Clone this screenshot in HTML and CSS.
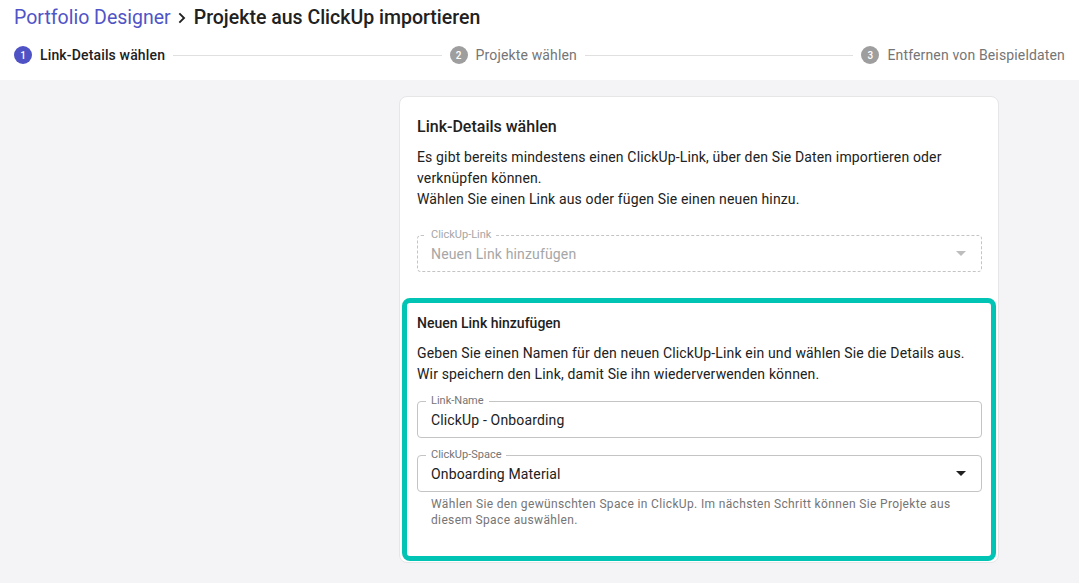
FILE: index.html
```html
<!DOCTYPE html>
<html lang="de">
<head>
    <meta charset="UTF-8">
    <title>Projekte aus ClickUp importieren</title>
    <link rel="stylesheet" href="styles.css">
</head>
<body>
    <header class="header">
        <h1 class="title">
            <span class="title-link">Portfolio Designer</span>
            <svg class="chevron" viewBox="0 0 24 24" width="20" height="20"><path d="M9.6 5.6 8 7.2 12.8 12 8 16.8l1.6 1.6L16 12z" fill="#212121"/></svg>
            <span class="title-current">Projekte aus ClickUp importieren</span>
        </h1>
        <div class="stepper">
            <div class="step active"><span class="step-num">1</span>Link-Details wählen</div>
            <div class="step-line"></div>
            <div class="step"><span class="step-num">2</span>Projekte wählen</div>
            <div class="step-line"></div>
            <div class="step"><span class="step-num">3</span>Entfernen von Beispieldaten</div>
        </div>
    </header>

    <main class="main">
        <div class="card">
            <div class="card-section">
                <h2 class="card-title">Link-Details wählen</h2>
                <p class="text">Es gibt bereits mindestens einen ClickUp-Link, über den Sie Daten importieren oder verknüpfen können.<br>Wählen Sie einen Link aus oder fügen Sie einen neuen hinzu.</p>
                <div class="field disabled">
                    <span class="field-label">ClickUp-Link</span>
                    <span class="field-value">Neuen Link hinzufügen</span>
                    <span class="caret"></span>
                </div>
            </div>

            <div class="new-link">
                <h3 class="new-link-title">Neuen Link hinzufügen</h3>
                <p class="text">Geben Sie einen Namen für den neuen ClickUp-Link ein und wählen Sie die Details aus.<br>Wir speichern den Link, damit Sie ihn wiederverwenden können.</p>
                <div class="field">
                    <span class="field-label">Link-Name</span>
                    <span class="field-value">ClickUp - Onboarding</span>
                </div>
                <div class="field select">
                    <span class="field-label">ClickUp-Space</span>
                    <span class="field-value">Onboarding Material</span>
                    <span class="caret"></span>
                </div>
                <p class="helper">Wählen Sie den gewünschten Space in ClickUp. Im nächsten Schritt können Sie Projekte aus diesem Space auswählen.</p>
            </div>
        </div>
    </main>
</body>
</html>
```

FILE: styles.css
```css
body {
    margin: 0;
    font-family: Roboto, "Liberation Sans", Arial, sans-serif;
    color: #212121;
    background-color: #fff;
}

.header {
    padding: 6px 14px 13px 14px;
}

.title {
    margin: 0;
    font-size: 19.5px;
    font-weight: 400;
    line-height: 24px;
    display: flex;
    align-items: center;
}

.title-link {
    color: #5054c6;
}

.title-current {
    font-weight: 500;
}

.chevron {
    margin: 0 2px 0 1px;
}

.stepper {
    margin-top: 13px;
    display: flex;
    align-items: center;
    height: 24px;
}

.step {
    display: flex;
    align-items: center;
    gap: 8px;
    font-size: 14px;
    letter-spacing: 0.15px;
    color: #757575;
    white-space: nowrap;
}

.step.active {
    color: #212121;
    font-weight: 500;
}

.step-num {
    width: 18px;
    height: 18px;
    border-radius: 50%;
    background-color: #9e9e9e;
    color: #fff;
    font-size: 10px;
    font-weight: 500;
    letter-spacing: 0;
    display: flex;
    align-items: center;
    justify-content: center;
}

.step.active .step-num {
    background-color: #4e52c4;
}

.step-line {
    flex: 1;
    height: 1px;
    background-color: #e0e0e0;
    margin: 0 8px;
}

.main {
    background-color: #f4f4f6;
    min-height: 503px;
    padding: 16px 0 0 399px;
    box-sizing: border-box;
}

.card {
    width: 600px;
    box-sizing: border-box;
    background-color: #fff;
    border: 1px solid #e6e6e8;
    border-radius: 8px;
}

.card-section {
    padding: 18px 16px 26px 17px;
}

.card-title {
    margin: 0 0 8px 0;
    font-size: 16px;
    font-weight: 500;
    line-height: 24px;
}

.text {
    margin: 0;
    font-size: 14px;
    line-height: 21px;
    letter-spacing: 0.15px;
    color: #212121;
}

.field {
    position: relative;
    margin-top: 25px;
    height: 37px;
    box-sizing: border-box;
    border: 1px solid #c4c4c4;
    border-radius: 4px;
    padding: 0 13px;
    display: flex;
    align-items: center;
    justify-content: space-between;
}

.field.disabled {
    border-style: dashed;
}

.field-label {
    position: absolute;
    top: -8px;
    left: 8px;
    padding: 0 5px;
    background-color: #fff;
    font-size: 11px;
    line-height: 14px;
    color: #757575;
}

.field.disabled .field-label,
.field.disabled .field-value {
    color: #a6a6a6;
}

.field-value {
    font-size: 14px;
    letter-spacing: 0.15px;
}

.caret {
    width: 0;
    height: 0;
    border-left: 5px solid transparent;
    border-right: 5px solid transparent;
    border-top: 5px solid #212121;
    margin-right: 2px;
}

.field.disabled .caret {
    border-top-color: #bdbdbd;
}

.new-link {
    margin: 0 2px 1px 2px;
    border: 5px solid #02c4b4;
    border-radius: 8px;
    padding: 10px 9px 28px 10px;
}

.new-link-title {
    margin: 0 0 10px 0;
    font-size: 14px;
    font-weight: 500;
    line-height: 20px;
}

.new-link .field {
    margin-top: 16px;
}

.new-link .field.select {
    margin-top: 17px;
}

.helper {
    margin: 4px 0 0 0;
    padding: 0 14px;
    font-size: 12px;
    line-height: 16px;
    letter-spacing: 0.35px;
    color: #757575;
}
```
